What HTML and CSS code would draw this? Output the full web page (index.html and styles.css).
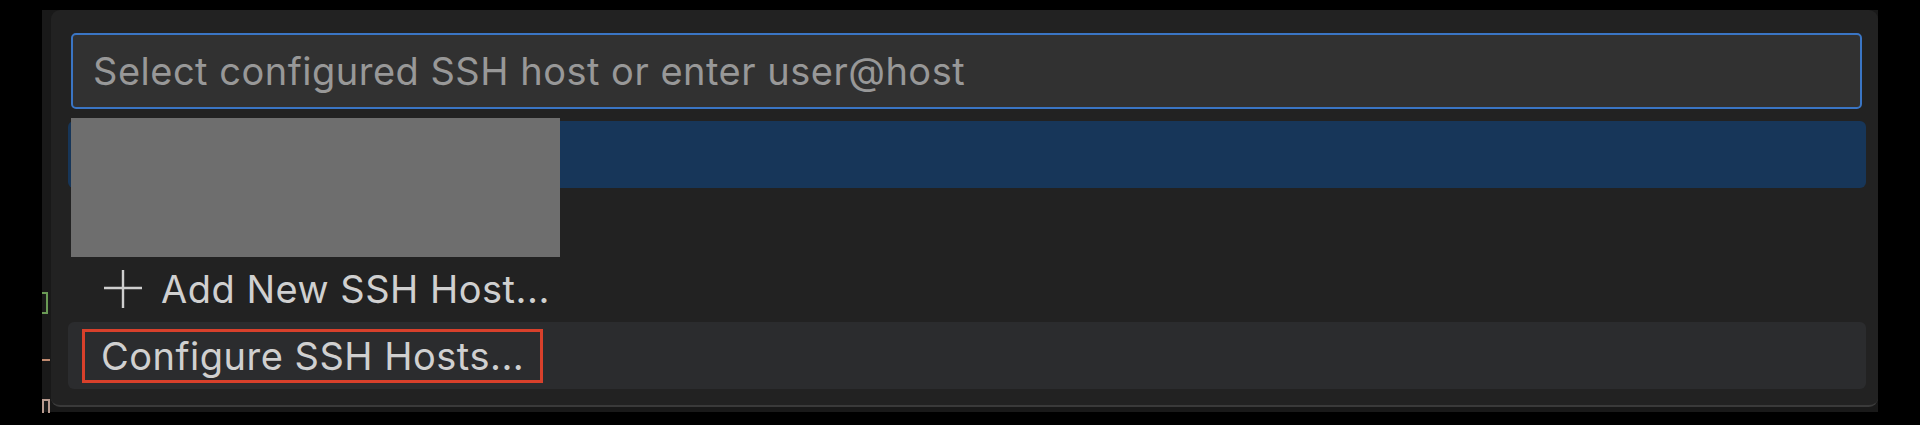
FILE: index.html
```html
<!DOCTYPE html>
<html lang="en">
<head>
<meta charset="utf-8">
<title>Select SSH host</title>
<link rel="stylesheet" href="styles.css">
</head>
<body>
<div class="window">
  <div class="editor-peek" aria-hidden="true">
    <div class="frag frag-green"></div>
    <div class="frag frag-orange"></div>
    <div class="frag frag-pink"></div>
  </div>
  <div class="quick-pick">
    <div class="qp-input">
      <span class="placeholder">Select configured SSH host or enter user@host</span>
    </div>
    <div class="qp-list">
      <div class="qp-row selected"></div>
      <div class="qp-row"></div>
      <div class="qp-row">
        <svg class="plus" width="40" height="40" viewBox="0 0 40 40" aria-hidden="true">
          <path d="M20 1 V39 M1 19 H39" stroke="#cfcfcf" stroke-width="2.4" fill="none"/>
        </svg>
        <span class="label">Add New SSH Host...</span>
      </div>
      <div class="qp-row focused">
        <span class="label marked">Configure SSH Hosts...</span>
      </div>
    </div>
    <div class="redaction"></div>
  </div>
</div>
</body>
</html>
```
FILE: styles.css
```css
* { box-sizing: border-box; }

html, body {
  margin: 0;
  padding: 0;
  background: #000000;
}

body {
  font-family: Inter, "Noto Sans", "Liberation Sans", sans-serif;
  height: 425px;
  overflow: hidden;
}

.window {
  margin: 10px 0 0 42px;
  width: 1836px;
  height: 402px;
  display: flex;
  background: #191919;
}

.editor-peek {
  width: 9px;
  flex: none;
  display: flex;
  flex-direction: column;
  align-items: flex-start;
  padding-top: 282px;
}

.frag { flex: none; }

.frag-green {
  width: 6px;
  height: 22px;
  border: 2px solid #6a9a55;
  border-left: none;
}

.frag-orange {
  width: 8px;
  height: 2px;
  margin-top: 45px;
  background: #c08a70;
}

.frag-pink {
  width: 8px;
  height: 14px;
  margin-top: 38px;
  border-top: 2px solid #b89a8e;
  border-right: 2px solid #b89a8e;
  border-left: 2px solid #b89a8e;
}

.quick-pick {
  position: relative;
  flex: 1;
  height: 397px;
  background: #222222;
  border-radius: 9px;
  border-bottom: 2px solid #3a3a3a;
  padding: 23px 12px 0 17px;
}

.qp-input {
  height: 76px;
  margin: 0 4px 0 3px;
  background: #313131;
  border: 2.5px solid #3a75c4;
  border-radius: 5px;
  display: flex;
  align-items: center;
  padding-left: 20px;
}

.placeholder {
  color: #989898;
  font-size: 38px;
  letter-spacing: 0.5px;
  line-height: 44px;
}

.qp-list {
  margin-top: 12px;
  display: flex;
  flex-direction: column;
}

.qp-row {
  height: 67px;
  border-radius: 6px;
  display: flex;
  align-items: center;
  padding-left: 35px;
  color: #d0d0d0;
  font-size: 38px;
  letter-spacing: 0.5px;
  line-height: 44px;
}

.qp-row.selected { background: #173659; }
.qp-row.focused { background: #2b2c2e; padding-left: 33px; }

.plus {
  flex: none;
  margin-right: 18px;
}

.label { white-space: nowrap; }

.marked { position: relative; }
.marked::after {
  content: "";
  position: absolute;
  top: -5px;
  bottom: -5px;
  left: -19px;
  right: -19px;
  border: 3px solid #d8402b;
}

.redaction {
  position: absolute;
  left: 20px;
  top: 108px;
  width: 489px;
  height: 139px;
  background: #6e6e6e;
}
```
